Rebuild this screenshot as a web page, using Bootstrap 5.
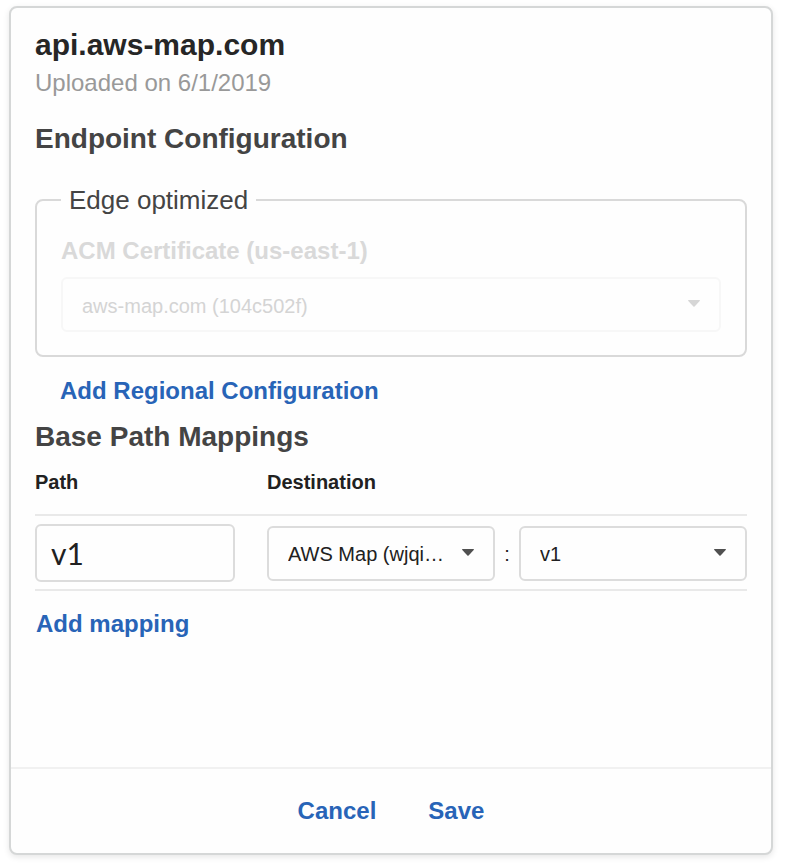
<!DOCTYPE html>
<html lang="en">
<head>
<meta charset="utf-8">
<meta name="viewport" content="width=device-width, initial-scale=1">
<title>api.aws-map.com</title>
<link href="https://cdn.jsdelivr.net/npm/bootstrap@5.3.0/dist/css/bootstrap.min.css" rel="stylesheet">
<style>
  body { font-family: "Liberation Sans", Arial, sans-serif; color: #212121; background: #fff; }
  .page { padding: 6px 13px 13px 9px; }
  .domain-card { border: 2px solid #d5d7d7; border-radius: 8px; box-shadow: 0 2px 6px rgba(0, 0, 0, .1); background: #fefefe; }
  .domain-body { padding: 18px 24px; }
  .domain-title, .section-title { font-size: 28px; line-height: 38px; font-weight: 700; margin: 0; }
  .domain-title { font-size: 30px; color: #262626; }
  .section-title { color: #444; }
  .uploaded { font-size: 24px; line-height: 38px; color: #999; }
  .endpoint-section { margin-top: 18px; }
  .endpoint { margin-top: 26px; padding: 20px 24px 23px; border: 2px solid #d9d9d9; border-radius: 8px; }
  .endpoint legend { float: none; width: auto; margin: 0; padding: 0 8px; font-size: 26px; line-height: 32px; color: #444; }
  .endpoint label { display: block; margin-bottom: 11px; font-size: 24px; line-height: 30px; font-weight: 700; color: #d9d9d9; }
  .picker { height: 55px; padding: 2px 44px 0 19px; border: 2px solid #dcdcdc; border-radius: 6px; font-size: 20px; color: #212121;
    background: #fefefe url("data:image/svg+xml,%3Csvg xmlns='http://www.w3.org/2000/svg' viewBox='0 0 12 7'%3E%3Cpath d='M.5 0h11q.7.3.2.9L6.6 6.4q-.6.5-1.2 0L.3.9Q-.2.3.5 0z' fill='%23505050'/%3E%3C/svg%3E") no-repeat right 19px top 21px / 12px 7px; }
  .picker:disabled { border-color: #f7f7f7; color: #d4d4d4; background-color: #fefefe;
    background-image: url("data:image/svg+xml,%3Csvg xmlns='http://www.w3.org/2000/svg' viewBox='0 0 12 7'%3E%3Cpath d='M.5 0h11q.7.3.2.9L6.6 6.4q-.6.5-1.2 0L.3.9Q-.2.3.5 0z' fill='%23d6d6d6'/%3E%3C/svg%3E"); }
  .action { border: 0; background: none; padding: 0; font-size: 24px; line-height: 30px; font-weight: 700; color: #2864b7; }
  .action:hover { color: #1b4b8f; }
  .add-regional { margin: 19px 0 12px 25px; }
  .add-mapping { margin: 18px 0 0 1px; }
  .mappings { width: 100%; table-layout: fixed; }
  .mappings th { padding: 14px 0 20px; font-size: 20px; line-height: 24px; border-bottom: 2px solid #e9e9e9; }
  .mappings td { padding: 8px 0 7px; border-bottom: 2px solid #e9e9e9; vertical-align: middle; }
  .mappings .path-col { width: 232px; padding-right: 32px; }
  .path-input { height: 58px; padding: 0 14px; border: 2px solid #dcdcdc; border-radius: 6px; font: 30px Lato, sans-serif; color: #212121; background: #fefefe; }
  .colon { width: 24px; padding-top: 2px; font-size: 20px; }
  .domain-footer { padding: 27px 24px; gap: 52px; border-top: 2px solid #f1f1f1; }
</style>
<script defer src="https://cdn.jsdelivr.net/npm/bootstrap@5.3.0/dist/js/bootstrap.bundle.min.js"></script>
</head>
<body>
<main class="page min-vh-100 d-flex flex-column">
  <form class="domain-card flex-grow-1 d-flex flex-column">
    <div class="domain-body flex-grow-1">
      <h1 class="domain-title">api.aws-map.com</h1>
      <p class="uploaded mb-0">Uploaded on 6/1/2019</p>

      <section class="endpoint-section">
        <h2 class="section-title">Endpoint Configuration</h2>
        <fieldset class="endpoint">
          <legend>Edge optimized</legend>
          <label for="cert">ACM Certificate (us-east-1)</label>
          <select id="cert" class="form-select picker" disabled><option>aws-map.com (104c502f)</option></select>
        </fieldset>
        <button type="button" class="action add-regional d-block">Add Regional Configuration</button>
      </section>

      <section>
        <h2 class="section-title">Base Path Mappings</h2>
        <table class="mappings">
          <thead>
            <tr><th scope="col" class="path-col">Path</th><th scope="col">Destination</th></tr>
          </thead>
          <tbody>
            <tr>
              <td class="path-col"><input type="text" class="form-control path-input" value="v1" aria-label="Path"></td>
              <td>
                <div class="d-flex align-items-center">
                  <select class="form-select picker" aria-label="Destination API"><option>AWS Map (wjqi…</option></select>
                  <span class="colon flex-shrink-0 text-center">:</span>
                  <select class="form-select picker" aria-label="Destination stage"><option>v1</option></select>
                </div>
              </td>
            </tr>
          </tbody>
        </table>
        <button type="button" class="action add-mapping d-block">Add mapping</button>
      </section>
    </div>
    <footer class="domain-footer d-flex justify-content-center">
      <button type="button" class="action">Cancel</button>
      <button type="submit" class="action">Save</button>
    </footer>
  </form>
</main>
</body>
</html>
